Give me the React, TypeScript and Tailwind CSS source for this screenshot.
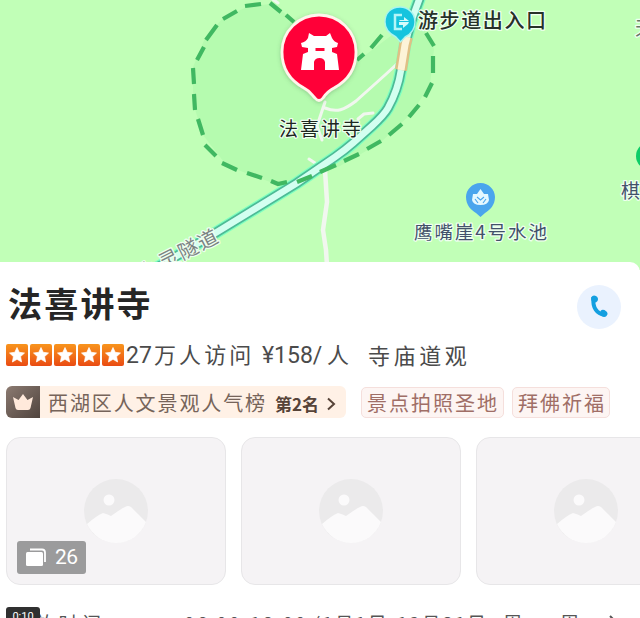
const FONT = '"Noto Sans CJK SC", "Noto Sans", sans-serif';

function TunnelMap() {
  const park =
    'M272 4 L249 6 L223 18 L205 38 L193 67 L193 103 L203 135 L227 166 L273 183 L297 181 L340 166 L380 143 L412 113 L430 84 L434 49 L424 29 L400 29 L360 59 L310 32 Z';
  const road =
    'M423 -12 L419 0 L411 22 L405 45 L401 70 Q398 90 388 108 Q384 115 372 126 L353 143 Q345 150 335 157 L297 183 L217 232 L148 273';
  return (
    <svg className="block h-full w-full" viewBox="0 0 640 270" fontFamily={FONT}>
      <defs>
        <filter id="pinShadow" x="-30%" y="-30%" width="160%" height="160%">
          <feDropShadow dx="0" dy="1" stdDeviation="2" floodColor="#40704a" floodOpacity="0.35" />
        </filter>
      </defs>
      <rect width="640" height="270" fill="#c1ffb7" />
      <path d={park} fill="#b5fbaf" />
      <g fill="none" stroke="#f1f7ef" strokeWidth="3" strokeLinecap="round" strokeLinejoin="round">
        <path d="M271 -2 L278 3" />
        <path d="M325 102 L317 126 L322 140" />
        <path d="M325 108 C337 113 344 110 356 101 L385 75 L398 63" />
        <path d="M358 119 L364 114 L373 113" />
        <path d="M309 159 L315 163" />
        <path d="M325 170 L327 202 L323 230 L326 250 L327 266" strokeWidth="4.500" />
      </g>
      <path d={road} fill="none" stroke="#7dffc0" strokeWidth="12.500" />
      <path d={road} fill="none" stroke="#4dbb96" strokeWidth="10" />
      <path d={road} fill="none" stroke="#d3fff0" strokeWidth="6.500" />
      <path d="M407 37 L405 45 L401 70" fill="none" stroke="#dfc085" strokeWidth="12" />
      <path d="M407 37 L405 45 L401 70" fill="none" stroke="#fdf3d8" strokeWidth="7" />
      <g fill="none" stroke="#40b861" strokeWidth="4.2">
        <path d="M270 3 L281 12 M286 15 L294 22" />
        <path d="M261 4 L245 6 M237 11 L223 19 M217 25 L206 40 M204 47 L197 60 M193 68 L194 84 M194 94 L195 110 M198 119 L203 135" />
        <path d="M205 145 L216 156 M222 163 L237 170 M247 173 L262 178 M271 181 L278 184 L287 182" />
        <path d="M297 182 L312 176 M320 172 L336 165 M344 161 L359 154 M367 149 L381 141 M389 135 L402 124 M409 117 L419 105 M425 97 L432 83 M433 73 L433 56 M434 46 L426 33" />
        <path d="M382 35 L371 48 M364 54 L357 60" />
      </g>

      {/* Temple pin */}
      <g filter="url(#pinShadow)">
        <path
          d="M319 15 C339 15 356 31 356 52 C356 69 347 81 334 88 C328 91 325 95 323 98 Q319 103 315 98 C312 95 310 91 304 88 C291 81 282 69 282 52 C282 31 299 15 319 15Z"
          fill="#ff0638"
          stroke="#fff4ec"
          strokeWidth="2.8"
        />
      </g>
      <path
        d="M308 38 L309 33 L314 36 H326 L330 33 L332 38 Q334 42 338 43 L337 47 L332 48 V52 L337 54 L339 70 H325 V62 Q324 58 319.500 58 Q315 58 314 62 V70 H301 L303 54 L308 52 V48 L302 47 L301 43 Q306 42 308 38Z"
        fill="#fff"
      />
      <path d="M315.500 48 H324.500 V51 H315.500Z" fill="#ff0638" />

      {/* Trail entrance pin */}
      <path
        d="M400 7 C408 7 415 13 415 22 C415 31 409 35 405 37 L400.500 42 L396 37 C390 34 385 30 385 22 C385 13 391 7 400 7Z"
        fill="#16c4de"
        stroke="#a9f4ef"
        strokeWidth="1.4"
      />
      <path d="M402 15 H395 V29 H402" fill="none" stroke="#b4f5f8" strokeWidth="2.5" />
      <path d="M399 20 H404 V17 L409 21 H400Z M409 22 H399 V25 H403 V28 L408 24Z" fill="#d3fbfb" />

      {/* Pond pin */}
      <path d="M480.500 183 C489 183 495 190 495 197 C495 205 490 210 485 213 L480.500 217 L476 213 C471 210 466 205 466 197 C466 190 472 183 480.500 183Z" fill="#4aa5ed" />
      <path d="M480.500 189 L484 194 L488 194 L489 200 Q488 205 480.500 205 Q473 205 472 200 L473 194 L477 194Z" fill="#e5f8ff" />
      <path d="M475 199 L478 203 M486 199 L483 203 M477 197 L480.500 200 L484 197" stroke="#4aa5ed" strokeWidth="1.100" fill="none" />
      <circle cx="650" cy="156" r="14" fill="#0ccd67" />

      <g stroke="#effff0" strokeWidth="2.5" strokeLinejoin="round" paintOrder="stroke">
        <text x="279" y="136" fontSize="19" textLength="82" fill="#1d271f">法喜讲寺</text>
        <text x="418" y="28" fontSize="20" fontWeight="500" textLength="128" fill="#263128">游步道出入口</text>
        <text x="414" y="239" fontSize="18.500" textLength="133" fill="#42516a">鹰嘴崖4号水池</text>
        <text x="621" y="198" fontSize="19" fill="#42516a">棋</text>
        <text x="635" y="35" fontSize="19" fill="#657667">天</text>
        <text transform="translate(144 280) rotate(-27)" fontSize="20" textLength="85" fill="#7b8383">九灵隧道</text>
      </g>
    </svg>
  );
}

function StarTile() {
  return (
    <span className="flex h-[22px] w-[22px] items-center justify-center rounded-[2px] bg-gradient-to-b from-[#f8941d] to-[#e94a13]">
      <svg width="18" height="18" viewBox="0 0 18 18">
        <path d="M9 1.500 L11.200 6.300 L16.500 7 L12.600 10.600 L13.600 16 L9 13.300 L4.400 16 L5.400 10.600 L1.500 7 L6.800 6.300Z" fill="#fff" stroke="#fff" strokeWidth=".7" strokeLinejoin="round" />
      </svg>
    </span>
  );
}

function PhotoCard({ count }: { count?: number }) {
  return (
    <div className="relative flex h-[148px] w-[220px] shrink-0 items-center justify-center rounded-[14px] border border-[#e7e6e8] bg-[#f5f3f5]">
      <svg width="64" height="64" viewBox="0 0 64 64">
        <circle cx="32" cy="32" r="32" fill="#ebeaeb" />
        <circle cx="25" cy="21" r="5.500" fill="#fbfafb" />
        <path d="M3 45 Q12 37 19 34 Q23 35 27 37 Q35 31 41 28 Q44 26 47 28 L62 43 C57 56 46 64 32 64 C19 64 8 56 3 45Z" fill="#fbfafb" />
      </svg>
      {count !== undefined && (
        <div className="absolute bottom-[10px] left-[10px] flex h-[33px] w-[69px] items-center gap-2 rounded-[3px] bg-[#9b9b9c] pl-2 text-white">
          <svg width="22" height="19" viewBox="0 0 22 19">
            <path d="M5 1.500 H17 Q20 1.500 20 4.500 V14" fill="none" stroke="#fff" strokeWidth="1.800" />
            <rect x="1" y="4" width="17" height="14" rx="1.500" fill="#fff" />
          </svg>
          <span className="font-[Roboto] text-[21px] leading-none tracking-[-0.5px]">{count}</span>
        </div>
      )}
    </div>
  );
}

function Tag({ children, width }: { children: string; width: string }) {
  return (
    <span className={`flex h-[31px] shrink-0 items-center rounded-[5px] border border-[#f5dfdc] bg-[#fdf5f3] pt-px pl-[5px] text-[20px] leading-none tracking-[2px] text-[#a06e66] ${width}`}>
      {children}
    </span>
  );
}

export default function App() {
  return (
    <main className="flex h-[618px] w-[640px] flex-col overflow-hidden bg-white font-['Noto_Sans_CJK_SC','Noto_Sans',sans-serif]">
      <div className="h-[270px] shrink-0">
        <TunnelMap />
      </div>
      <section className="relative -mt-2 flex h-[356px] shrink-0 flex-col rounded-tr-[10px] bg-white whitespace-nowrap">
        <header className="flex h-[82px] items-center justify-between pr-[19px] pl-2">
          <h1 className="text-[34px] leading-none font-bold tracking-[2.2px] text-[#262626]">法喜讲寺</h1>
          <button className="mt-[7px] flex h-[44px] w-[44px] items-center justify-center rounded-full bg-[#eaf2fe]" aria-label="电话">
            <svg width="20" height="25" viewBox="0 0 20 25">
              <path d="M4.500 5.500 C3.500 13 8 20 15 20.500" fill="none" stroke="#149fe0" strokeWidth="4" />
              <path d="M2 3.500 Q4 .5 7 2 Q10 4 8.500 7 Q7 9.500 3.500 8.500 Q1.500 6 2 3.500Z" fill="#149fe0" />
              <path d="M11.500 17 Q13 15 15.500 16 L18 18 Q19.500 20 17.500 22 Q15.500 24 12.500 22Z" fill="#149fe0" />
            </svg>
          </button>
        </header>

        <div className="flex h-[22px] items-center pl-[6px] text-[22px] leading-none text-[#4b4b4b]">
          <span className="flex w-[120px] gap-[2px]">
            <StarTile />
            <StarTile />
            <StarTile />
            <StarTile />
            <StarTile />
          </span>
          <span className="-mt-0.5 flex w-[136px] items-baseline">
            <span className="w-[28px] font-[Roboto] text-[23px] leading-none">27</span>
            <span className="tracking-[3.1px]">万人访问</span>
          </span>
          <span className="-mt-0.5 flex w-[106px] items-baseline">
            <span className="w-[65px] font-[Roboto] text-[23px] leading-none">¥158/</span>
            <span>人</span>
          </span>
          <span className="-mt-0.5 tracking-[3.6px]">寺庙道观</span>
        </div>

        <div className="mt-5 flex h-8 items-center pl-[6px]">
          <div className="flex h-8 w-[340px] shrink-0 items-center rounded-[6px] bg-[#fff1e6] text-[#76645a]">
            <span className="flex h-full w-[34px] items-center justify-center rounded-l-[6px] bg-gradient-to-br from-[#8c7b72] to-[#50443e]">
              <svg width="22" height="18" viewBox="0 0 22 18">
                <path d="M1 4 L6.500 7 L11 1 L15.500 7 L21 4 L18.500 15 Q18 17 16 17 H6 Q4 17 3.500 15Z" fill="#ffe9db" />
              </svg>
            </span>
            <span className="mt-0.5 ml-2 w-[227px] text-[20px] leading-none tracking-[1.9px]">西湖区人文景观人气榜</span>
            <span className="mt-0.5 w-[48px] text-[17px] leading-none font-bold text-[#564338]">第2名</span>
            <svg className="mt-1 ml-[3px]" width="10" height="14" viewBox="0 0 10 14">
              <path d="M2 1.500 L8 7 L2 12.500" fill="none" stroke="#564338" strokeWidth="2" />
            </svg>
          </div>
          <div className="ml-[15px] flex gap-2">
            <Tag width="w-[143px]">景点拍照圣地</Tag>
            <Tag width="w-[98px]">拜佛祈福</Tag>
          </div>
        </div>

        <div className="mt-[19px] flex gap-[15px] overflow-hidden pl-[6px]">
          <PhotoCard count={26} />
          <PhotoCard />
          <PhotoCard />
        </div>

        <div className="mt-[22px] flex h-[11px] overflow-hidden pl-[6px] text-[19px] leading-[31px] text-[#555]">
          <span className="z-10 h-[24px] w-[34px] shrink-0 rounded-[3px] bg-[#303030] pt-[3px] text-center font-[Roboto] text-[11px] leading-[13px] text-white">0:10</span>
          <span className="-ml-[5px] w-[149px] shrink-0 tracking-[4.5px]">放时间</span>
          <span className="w-[130px] shrink-0 tracking-[2px]">06:00-18:00</span>
          <span className="w-[189px] shrink-0 tracking-[1.8px]">(1月1日-12月31日</span>
          <span className="w-[105px] shrink-0">周一、周一</span>
          <svg className="mt-[8px] shrink-0" width="12" height="16" viewBox="0 0 12 16">
            <path d="M2 1 L9 8 L2 15" fill="none" stroke="#555" strokeWidth="2" />
          </svg>
        </div>
      </section>
    </main>
  );
}
